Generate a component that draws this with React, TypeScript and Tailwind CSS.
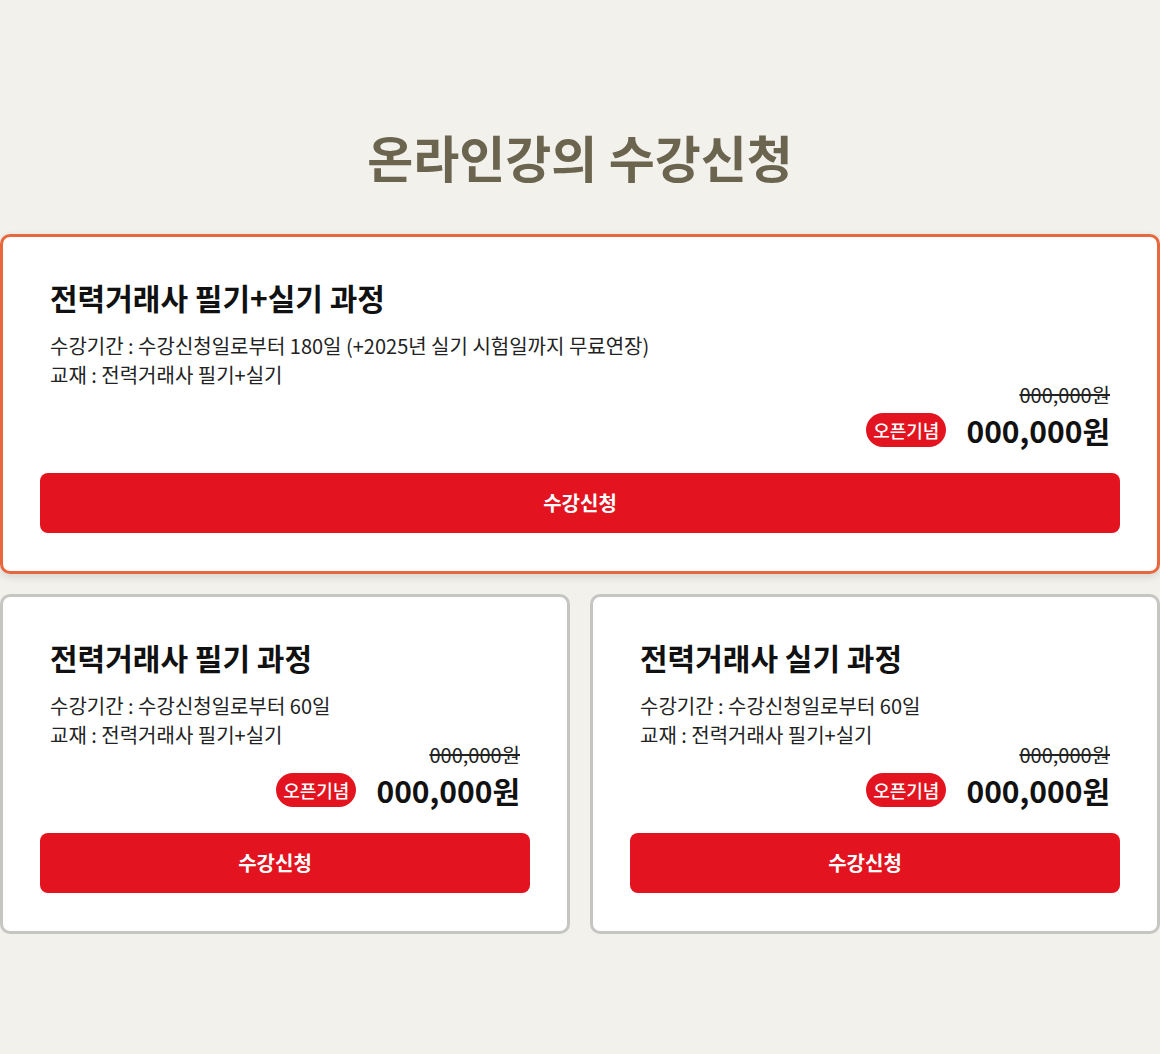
const font = { fontFamily: '"Noto Sans CJK KR", "Noto Sans", sans-serif' };

type Course = {
  title: string;
  period: string;
  book: string;
  highlight?: boolean;
};

const courses: Course[] = [
  {
    title: "전력거래사 필기+실기 과정",
    period: "수강기간 : 수강신청일로부터 180일 (+2025년 실기 시험일까지 무료연장)",
    book: "교재 : 전력거래사 필기+실기",
    highlight: true,
  },
  {
    title: "전력거래사 필기 과정",
    period: "수강기간 : 수강신청일로부터 60일",
    book: "교재 : 전력거래사 필기+실기",
  },
  {
    title: "전력거래사 실기 과정",
    period: "수강기간 : 수강신청일로부터 60일",
    book: "교재 : 전력거래사 필기+실기",
  },
];

function CourseCard({ course }: { course: Course }) {
  return (
    <div
      className={
        course.highlight
          ? "bg-white border-[3px] border-[#e8673d] rounded-[10px] px-[37px] pt-[40px] pb-[38px] shadow-[0_3px_8px_rgba(0,0,0,0.12)]"
          : "bg-white border-[3px] border-[#c5c5c2] rounded-[10px] px-[37px] pt-[40px] pb-[38px]"
      }
    >
      <div className="px-[10px]">
        <h3 className="text-[30px] leading-[40px] font-bold text-[#111]">{course.title}</h3>
        <div className="mt-[14px] text-[20px] leading-[29px] text-[#222]">
          <p>{course.period}</p>
          <p>{course.book}</p>
        </div>
        <div className="flex flex-col items-end">
          <p className="-mt-[4px] text-[20px] leading-[20px] line-through text-[#222]">000,000원</p>
          <div className="flex items-center gap-[20px] mt-[5px]">
            <span className="bg-[#e3141f] text-white text-[18px] font-medium leading-[34px] px-[7px] rounded-full">
              오픈기념
            </span>
            <span className="text-[30px] leading-[40px] font-bold text-[#111]">000,000원</span>
          </div>
        </div>
      </div>
      <button
        className={
          course.highlight
            ? "mt-[23px] w-full h-[60px] bg-[#e3141f] rounded-[8px] text-white text-[20px] font-bold"
            : "mt-[23px] w-full h-[60px] bg-[#e3141f] rounded-[8px] text-white text-[20px] font-bold pr-[20px]"
        }
      >
        수강신청
      </button>
    </div>
  );
}

export default function App() {
  return (
    <div className="min-h-[1054px] bg-[#f2f1ec] pt-[121px]" style={font}>
      <h2 className="text-center text-[50px] leading-[70px] font-bold text-[#6b6550]">
        온라인강의 수강신청
      </h2>
      <div className="mt-[43px] flex flex-col gap-[20px]">
        <CourseCard course={courses[0]} />
        <div className="grid grid-cols-2 gap-[20px]">
          <CourseCard course={courses[1]} />
          <CourseCard course={courses[2]} />
        </div>
      </div>
    </div>
  );
}
